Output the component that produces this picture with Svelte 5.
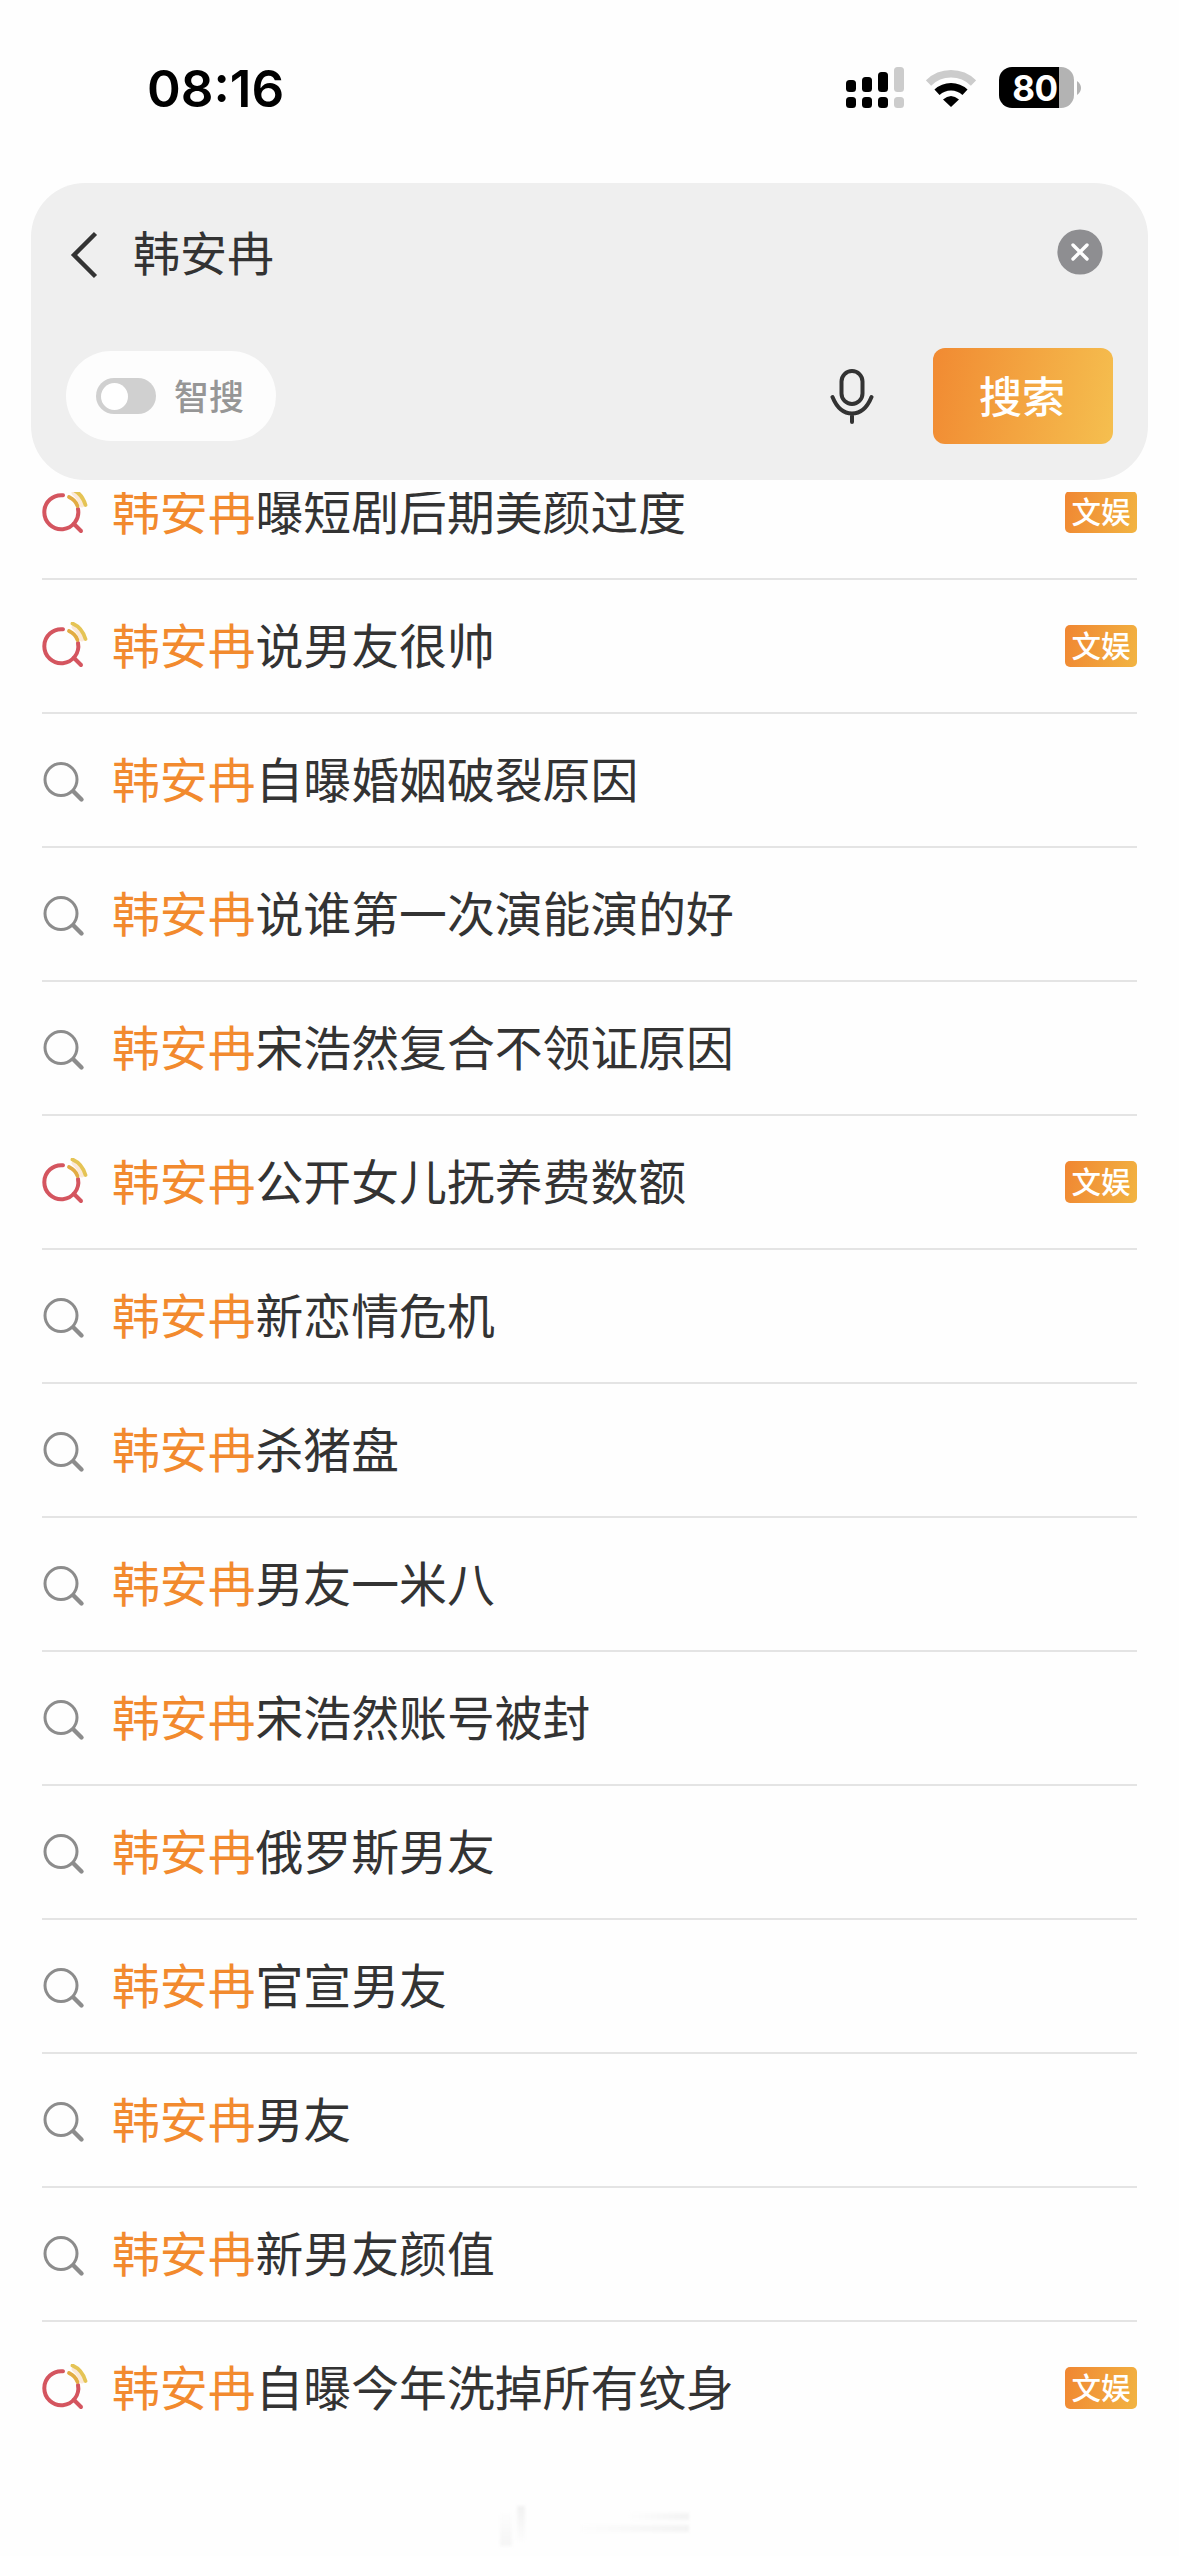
<script>
  const keyword = '韩安冉';
  const rows = [
    { text: '曝短剧后期美颜过度', hot: true },
    { text: '说男友很帅', hot: true },
    { text: '自曝婚姻破裂原因' },
    { text: '说谁第一次演能演的好' },
    { text: '宋浩然复合不领证原因' },
    { text: '公开女儿抚养费数额', hot: true },
    { text: '新恋情危机' },
    { text: '杀猪盘' },
    { text: '男友一米八' },
    { text: '宋浩然账号被封' },
    { text: '俄罗斯男友' },
    { text: '官宣男友' },
    { text: '男友' },
    { text: '新男友颜值' },
    { text: '自曝今年洗掉所有纹身', hot: true },
  ];
</script>

<main class="screen">
  <header class="status">
    <span class="time">08:16</span>
    <div class="indicators">
      <svg class="signal" viewBox="0 0 58 41">
        <g fill="#000">
          <rect x="0" y="13" width="10" height="12" rx="3.5" />
          <rect x="16" y="10" width="10" height="15" rx="3.5" />
          <rect x="32" y="5" width="10" height="20" rx="3.5" />
          <rect x="0" y="30" width="10" height="11" rx="3.5" />
          <rect x="16" y="30" width="10" height="11" rx="3.5" />
          <rect x="32" y="30" width="10" height="11" rx="3.5" />
        </g>
        <g fill="#ccc">
          <rect x="48" y="0" width="10" height="25" rx="3.5" />
          <rect x="48" y="30" width="10" height="11" rx="3.5" />
        </g>
      </svg>
      <svg class="wifi" viewBox="0 0 50 38">
        <path d="M2.500 14A32 32 0 0 1 47.500 14" fill="none" stroke="#ccc" stroke-width="7.500" />
        <path d="M11 23.200A20.500 20.500 0 0 1 39 23.200" fill="none" stroke="#000" stroke-width="7.500" />
        <path d="M17 30.500Q25 23.500 33 30.500L25 38Z" />
      </svg>
      <div class="battery">
        <div class="cell"><span>80</span></div>
        <svg class="nub" viewBox="0 0 4 14"><path d="M0 0Q4 3 4 7T0 14Z" fill="#b3b3b3" /></svg>
      </div>
    </div>
  </header>

  <section class="panel">
    <div class="query">
      <svg class="back" viewBox="0 0 30 50"><path d="M25.500 3.500L4 25L25.500 46.500" fill="none" stroke="#333" stroke-width="4.400" /></svg>
      <span class="term">{keyword}</span>
      <svg class="clear" viewBox="0 0 46 46">
        <circle cx="23" cy="23" r="22.600" fill="#8e8e91" />
        <path d="M16 16L30 30M30 16L16 30" stroke="#fff" stroke-width="3.400" stroke-linecap="round" />
      </svg>
    </div>
    <div class="actions">
      <div class="smart">
        <span class="toggle"><i class="knob"></i></span>
        <span class="label">智搜</span>
      </div>
      <svg class="mic" viewBox="0 0 44 56" fill="none" stroke="#333" stroke-width="4" stroke-linecap="round">
        <rect x="11.500" y="3" width="21" height="33" rx="10.500" />
        <path d="M2.500 29C7 40 13 45.500 22 45.500S37 40 41.500 29M22 46V54" />
      </svg>
      <button class="go">搜索</button>
    </div>
  </section>

  <div class="viewport">
    <ul class="list">
      {#each rows as row}
        <li class="row">
          {#if row.hot}
            <svg class="icon" viewBox="0 0 48 48" fill="none" stroke-linecap="round">
              <path d="M21 7.300A17 17 0 1 0 36 21" stroke="#d4555f" stroke-width="4" />
              <path d="M32 36L39 43" stroke="#d4555f" stroke-width="4" />
              <path d="M32 5Q37 9 40 17" stroke="#fbe9d8" stroke-width="5" />
              <path d="M27 9Q33.500 12 35.500 18" stroke="#e2ac43" stroke-width="3.800" />
              <path d="M30.500 1.500Q40 5.500 43.500 17" stroke="#e5c455" stroke-width="3.800" />
            </svg>
          {:else}
            <svg class="icon" viewBox="0 0 48 48" fill="none" stroke="#8c8c8c" stroke-linecap="round">
              <circle cx="19" cy="23.600" r="16" stroke-width="3" />
              <path d="M31.500 35.500L39.500 43.500" stroke-width="4.400" />
            </svg>
          {/if}
          <span class="text"><em>{keyword}</em>{row.text}</span>
          {#if row.hot}<span class="badge">文娱</span>{/if}
        </li>
      {/each}
    </ul>
    <svg class="smudge" viewBox="0 0 190 44">
      <defs>
        <linearGradient id="fade-x"><stop offset="0" stop-color="#fdfdfd" /><stop offset="1" stop-color="#f3f3f3" /></linearGradient>
        <linearGradient id="fade-down" x2="0" y2="1"><stop offset="0" stop-color="#f1f1f1" /><stop offset="1" stop-color="#fdfdfd" /></linearGradient>
        <linearGradient id="fade-up" x2="0" y2="1"><stop offset="0" stop-color="#fdfdfd" /><stop offset="1" stop-color="#f5f5f5" /></linearGradient>
      </defs>
      <rect x="17" y="1" width="8" height="36" fill="url(#fade-down)" />
      <rect x="0" y="8" width="12" height="33" fill="url(#fade-up)" />
      <rect x="130" y="8" width="59" height="7" fill="url(#fade-x)" />
      <rect x="80" y="20" width="109" height="7" fill="url(#fade-x)" />
    </svg>
  </div>
</main>

<style>
  :global(body) { margin: 0; background: #fefefe; }
  .screen {
    box-sizing: border-box;
    width: 1179px;
    height: 2556px;
    overflow: hidden;
    background: #fefefe;
    color: #333;
    font-family: "Noto Sans CJK SC", sans-serif;
  }
  .status {
    display: flex;
    justify-content: space-between;
    align-items: center;
    box-sizing: border-box;
    height: 183px;
    padding: 0 98px 8px 147px;
  }
  .time {
    font: 600 51.200px/60px Inter, sans-serif;
    color: #000;
  }
  .indicators { display: flex; align-items: center; }
  .signal { width: 58px; height: 41px; }
  .wifi { width: 50px; height: 38px; margin: 0 23px 0 22px; }
  .battery { display: flex; align-items: center; gap: 3px; }
  .cell {
    box-sizing: border-box;
    width: 75px;
    height: 41px;
    padding-right: 3px;
    border-radius: 13px;
    background: linear-gradient(90deg, #000 60px, #b3b3b3 60px);
    color: #fff;
    text-align: center;
    font: 700 35px/42px Inter, sans-serif;
    letter-spacing: -0.5px;
  }
  .nub { width: 4px; height: 14px; }
  .panel {
    box-sizing: border-box;
    width: 1117px;
    height: 297px;
    margin-left: 31px;
    padding: 40px 35px 36px;
    border-radius: 54px;
    background: #efefef;
  }
  .query { display: flex; align-items: center; height: 60px; }
  .back { width: 30px; height: 50px; margin: 4px 33px 0 4px; }
  .term { flex: 1; padding-bottom: 5px; font-size: 47px; line-height: 60px; }
  .clear { width: 46px; height: 46px; margin: 0 10px 3px 0; }
  .actions { display: flex; align-items: center; height: 96px; margin-top: 65px; }
  .smart {
    display: flex;
    align-items: center;
    box-sizing: border-box;
    width: 210px;
    height: 90px;
    padding-left: 30px;
    border-radius: 45px;
    background: #fdfdfd;
  }
  .toggle {
    box-sizing: border-box;
    width: 60px;
    height: 36px;
    padding: 4.500px;
    border-radius: 18px;
    background: #d0d0d0;
  }
  .knob { display: block; width: 27px; height: 27px; border-radius: 50%; background: #fff; }
  .label {
    margin-left: 18px;
    padding-bottom: 3px;
    font-size: 35px;
    font-weight: 500;
    line-height: 50px;
    color: #969696;
  }
  .mic { width: 44px; height: 56px; margin: 0 59px 0 auto; }
  .go {
    width: 180px;
    height: 96px;
    padding: 0 2px 4px 0;
    border: 0;
    border-radius: 12px;
    background: linear-gradient(100deg, #f18a32, #f5bf4f);
    color: #fff;
    font: 500 43px/92px "Noto Sans CJK SC", sans-serif;
  }
  .viewport { position: relative; height: 2064px; margin-top: 12px; overflow: hidden; }
  .list { margin: -46px 0 0; padding: 0 42px; list-style: none; }
  .row {
    display: flex;
    align-items: center;
    box-sizing: border-box;
    height: 134px;
    border-bottom: 2px solid #e4e4e4;
  }
  .row:last-child { border-color: transparent; }
  .icon { width: 48px; height: 48px; margin-right: 22px; }
  .text {
    flex: 1;
    padding-bottom: 6px;
    font-size: 47.850px;
    line-height: 70px;
    white-space: nowrap;
  }
  em { font-style: normal; color: #f28a2e; }
  .badge {
    width: 72px;
    height: 42px;
    border-radius: 5px;
    background: linear-gradient(105deg, #f08632, #f2b442);
    color: #fff;
    text-align: center;
    font-size: 29.500px;
    font-weight: 500;
    line-height: 39px;
  }
  .smudge {
    position: absolute;
    left: 500px;
    bottom: 7px;
    width: 190px;
    height: 44px;
    filter: blur(1.500px);
  }
</style>
